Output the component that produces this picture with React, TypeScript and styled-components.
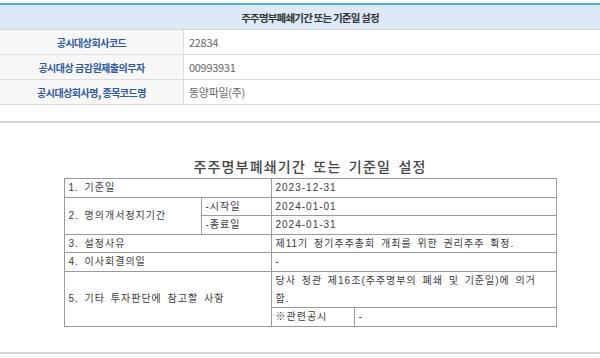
import styled, { createGlobalStyle } from 'styled-components';

const GlobalStyle = createGlobalStyle`
    body {
        margin: 0;
        background: #fff;
        overflow: hidden;
        font-family: 'Noto Sans CJK KR', 'Noto Sans', sans-serif;
    }
`;

interface IInfoRow {
    label: string;
    value: string;
}

const infoRows: IInfoRow[] = [
    { label: '공시대상회사코드', value: '22834' },
    { label: '공시대상 금감원제출의무자', value: '00993931' },
    { label: '공시대상회사명, 종목코드명', value: '동양파일(주)' },
];

const App = () => {
    return (
        <StyledPage>
            <GlobalStyle />
            <StyledInfoTable>
                <thead>
                    <tr>
                        <StyledHeaderCell colSpan={2}>
                            주주명부폐쇄기간 또는 기준일 설정
                        </StyledHeaderCell>
                    </tr>
                </thead>
                <tbody>
                    {infoRows.map((row) => (
                        <tr key={row.label}>
                            <StyledLabelCell>{row.label}</StyledLabelCell>
                            <StyledValueCell>{row.value}</StyledValueCell>
                        </tr>
                    ))}
                </tbody>
            </StyledInfoTable>
            <StyledSpacer />

            <StyledDocument>
                <StyledDocInner>
                    <StyledTitle>주주명부폐쇄기간 또는 기준일 설정</StyledTitle>
                    <StyledDocTable>
                        <colgroup>
                            <col style={{ width: 137 }} />
                            <col style={{ width: 70 }} />
                            <col style={{ width: 83 }} />
                            <col />
                        </colgroup>
                        <tbody>
                            <tr>
                                <StyledCell colSpan={2}>1. 기준일</StyledCell>
                                <StyledCell colSpan={2}>2023-12-31</StyledCell>
                            </tr>
                            <tr>
                                <StyledCell rowSpan={2}>2. 명의개서정지기간</StyledCell>
                                <StyledCell>-시작일</StyledCell>
                                <StyledCell colSpan={2}>2024-01-01</StyledCell>
                            </tr>
                            <tr>
                                <StyledCell>-종료일</StyledCell>
                                <StyledCell colSpan={2}>2024-01-31</StyledCell>
                            </tr>
                            <tr>
                                <StyledCell colSpan={2}>3. 설정사유</StyledCell>
                                <StyledCell colSpan={2}>
                                    제11기 정기주주총회 개최를 위한 권리주주 확정.
                                </StyledCell>
                            </tr>
                            <tr>
                                <StyledCell colSpan={2}>4. 이사회결의일</StyledCell>
                                <StyledCell colSpan={2}>-</StyledCell>
                            </tr>
                            <tr>
                                <StyledCell colSpan={2} rowSpan={2}>
                                    5. 기타 투자판단에 참고할 사항
                                </StyledCell>
                                <StyledCell colSpan={2}>
                                    당사 정관 제16조(주주명부의 폐쇄 및 기준일)에 의거
                                    <br />
                                    함.
                                </StyledCell>
                            </tr>
                            <tr>
                                <StyledCell>※관련공시</StyledCell>
                                <StyledCell>-</StyledCell>
                            </tr>
                        </tbody>
                    </StyledDocTable>
                </StyledDocInner>
            </StyledDocument>
        </StyledPage>
    );
};

const StyledPage = styled.div`
    width: 620px;
    padding-top: 3px;
`;

const StyledInfoTable = styled.table`
    width: 100%;
    border-collapse: collapse;
    border-top: 2px solid #4aafc8;
`;

const StyledHeaderCell = styled.th`
    height: 24px;
    padding: 0;
    background: #dde9f6;
    border-bottom: 1px solid #cfd6de;
    color: #333;
    font-size: 10.5px;
    font-weight: 700;
    letter-spacing: -0.8px;
    text-align: center;
`;

const StyledLabelCell = styled.th`
    width: 183px;
    height: 24px;
    padding: 0;
    background: #f7f7f7;
    border-bottom: 1px solid #dcdcdc;
    border-right: 1px solid #dcdcdc;
    color: #2d58a6;
    font-size: 10px;
    font-weight: 700;
    letter-spacing: -0.5px;
    text-align: center;
`;

const StyledValueCell = styled.td`
    height: 24px;
    padding: 0 0 0 5px;
    border-bottom: 1px solid #dcdcdc;
    color: #666;
    font-size: 11px;
    letter-spacing: -0.3px;
`;

const StyledSpacer = styled.div`
    height: 16px;
    border-bottom: 2px solid #d4d4d4;
`;

const StyledDocument = styled.div`
    height: 229px;
    border-bottom: 2px solid #d4d4d4;
    display: flex;
    justify-content: center;
`;

const StyledDocInner = styled.div`
    width: 493px;
    padding-top: 34px;
    display: flex;
    flex-direction: column;
    align-items: center;
`;

const StyledTitle = styled.div`
    height: 21px;
    line-height: 18px;
    color: #444;
    font-size: 14px;
    font-weight: 500;
    letter-spacing: 1.2px;
    word-spacing: 3px;
`;

const StyledDocTable = styled.table`
    width: 100%;
    border-collapse: collapse;
    table-layout: fixed;
    border: 1px solid #8f8f8f;
`;

const StyledCell = styled.td`
    padding: 0 4px;
    border: 1px solid #9a9a9a;
    color: #3a3a3a;
    font-family: 'Liberation Sans', 'Noto Sans CJK KR', sans-serif;
    font-size: 10px;
    line-height: 17.6px;
    letter-spacing: 1px;
    word-spacing: 2px;
    vertical-align: middle;
    white-space: nowrap;
`;

export default App;
